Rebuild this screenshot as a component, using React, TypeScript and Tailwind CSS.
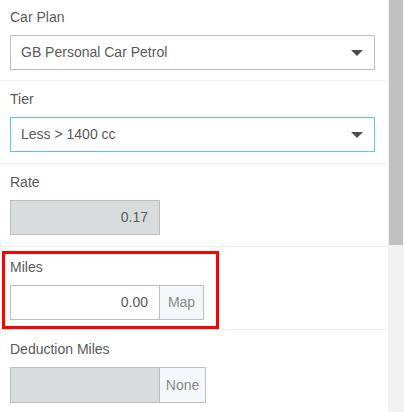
import React from "react";

const Caret = () => (
  <svg width="12" height="6" viewBox="0 0 12 6" className="shrink-0">
    <path d="M0 0 L12 0 L6 6 Z" fill="#4a4f54" />
  </svg>
);

export default function App() {
  return (
    <div
      className="flex w-[404px] h-[412px] overflow-hidden bg-white text-[#595959]"
      style={{ fontFamily: '"Liberation Sans", Arial, sans-serif' }}
    >
      <div className="flex flex-col w-[388px]">
        {/* Car Plan */}
        <div className="flex flex-col pl-[10px] pr-[12px] pt-[8px] h-[81px] border-b border-[#f0f0f0]">
          <div className="text-[14px] leading-[18px] h-[18px]">Car Plan</div>
          <div className="mt-[9px] flex items-center justify-between h-[35px] w-[365px] border border-[#bdbdbd] pl-[10px] pr-[11px]">
            <span className="text-[14px]">GB Personal Car Petrol</span>
            <Caret />
          </div>
        </div>
        {/* Tier */}
        <div className="flex flex-col pl-[10px] pr-[12px] pt-[9px] h-[83px] border-b border-[#f0f0f0]">
          <div className="text-[14px] leading-[18px] h-[18px]">Tier</div>
          <div className="mt-[9px] flex items-center justify-between h-[35px] w-[365px] border border-[#5bc8d8] pl-[10px] pr-[11px]">
            <span className="text-[14px]">Less &gt; 1400 cc</span>
            <Caret />
          </div>
        </div>
        {/* Rate */}
        <div className="flex flex-col pl-[10px] pt-[9px] h-[83px] border-b border-[#f0f0f0]">
          <div className="text-[14px] leading-[18px] h-[18px]">Rate</div>
          <div className="mt-[9px] flex items-center justify-end h-[35px] w-[150px] border border-[#bdbdbd] bg-[#d9dcdd] pr-[11px]">
            <span className="text-[14px]">0.17</span>
          </div>
        </div>
        {/* Miles */}
        <div className="flex flex-col pl-[2px] pt-[4px] h-[83px] border-b border-[#f0f0f0]">
          <div className="w-[217px] h-[81px] border-[3px] border-[#ff0000] flex flex-col pl-[5px] pt-[4px]">
            <div className="text-[14px] leading-[18px] h-[18px]">Miles</div>
            <div className="mt-[9px] flex h-[35px]">
              <div className="flex items-center justify-end w-[150px] border border-[#bdbdbd] pr-[11px]">
                <span className="text-[14px]">0.00</span>
              </div>
              <div className="flex items-center justify-center w-[44px] border border-l-0 border-[#bdbdbd] bg-[#f5f7fa] text-[#888] text-[14px]">
                Map
              </div>
            </div>
          </div>
        </div>
        {/* Deduction Miles */}
        <div className="flex flex-col pl-[10px] pt-[10px]">
          <div className="text-[14px] leading-[18px] h-[18px]">Deduction Miles</div>
          <div className="mt-[9px] flex h-[36px]">
            <div className="w-[150px] border border-[#bdbdbd] bg-[#d9dcdd]" />
            <div className="flex items-center justify-center w-[46px] border border-l-0 border-[#bdbdbd] bg-[#f5f7fa] text-[#888] text-[14px]">
              None
            </div>
          </div>
        </div>
      </div>
      {/* Scrollbar */}
      <div className="w-[16px] h-full bg-[#f1f1f1] flex justify-center">
        <div className="w-[14px] h-[245px] bg-[#c1c1c1]" />
      </div>
    </div>
  );
}
